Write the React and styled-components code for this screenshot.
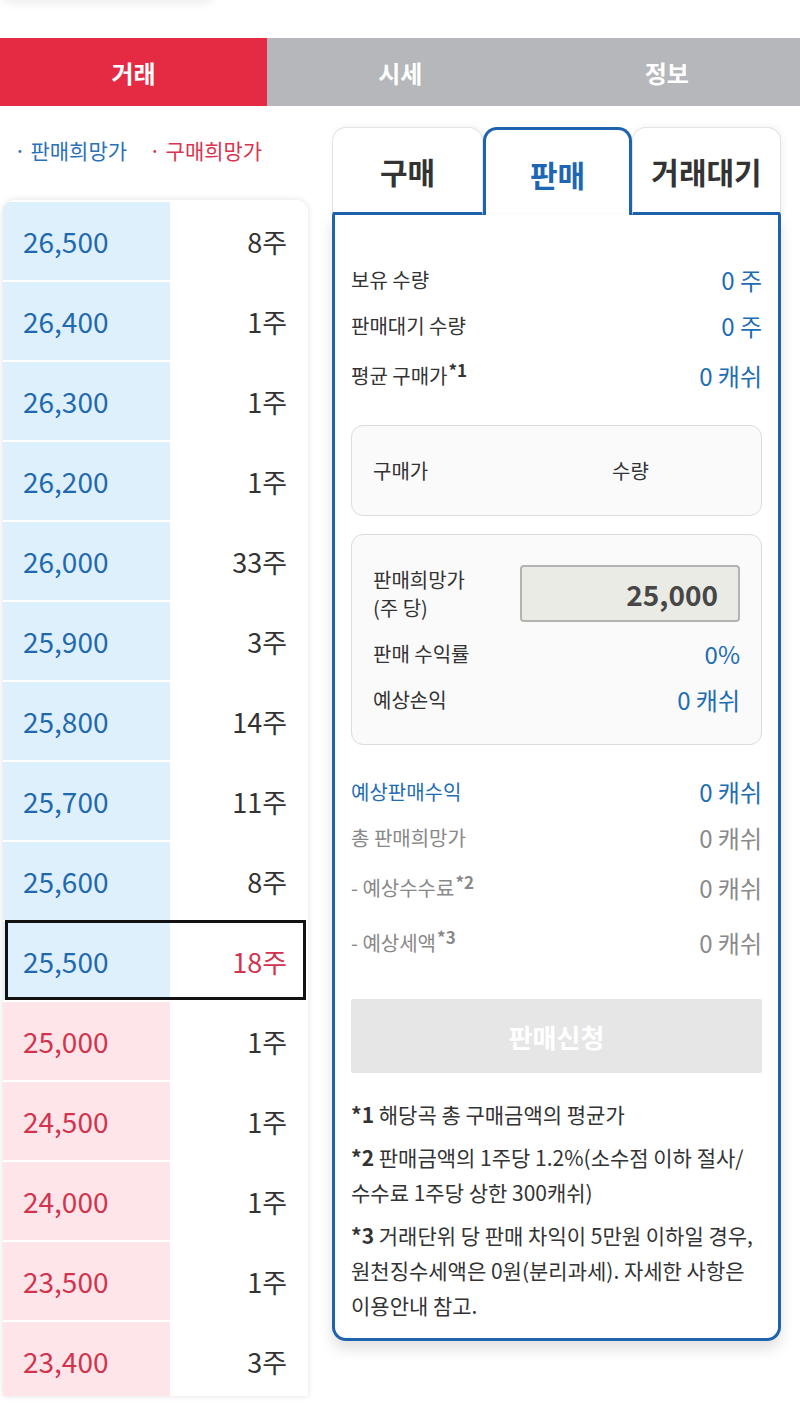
import styled, { createGlobalStyle } from "styled-components";

const GlobalStyle = createGlobalStyle`
  body {
    margin: 0;
    background: #fff;
    font-family: "Noto Sans CJK KR", "Noto Sans", sans-serif;
    color: #333;
  }
`;

const asks = [
  { price: "26,500", qty: "8주" },
  { price: "26,400", qty: "1주" },
  { price: "26,300", qty: "1주" },
  { price: "26,200", qty: "1주" },
  { price: "26,000", qty: "33주" },
  { price: "25,900", qty: "3주" },
  { price: "25,800", qty: "14주" },
  { price: "25,700", qty: "11주" },
  { price: "25,600", qty: "8주" },
  { price: "25,500", qty: "18주", current: true },
];

const bids = [
  { price: "25,000", qty: "1주" },
  { price: "24,500", qty: "1주" },
  { price: "24,000", qty: "1주" },
  { price: "23,500", qty: "1주" },
  { price: "23,400", qty: "3주" },
];

const App = () => {
  return (
    <>
      <GlobalStyle />
      <Page>
        <TopArea>
          <GhostCard />
        </TopArea>
        <MainTabs>
          <MainTab active>거래</MainTab>
          <MainTab>시세</MainTab>
          <MainTab>정보</MainTab>
        </MainTabs>

        <Content>
          <BookColumn>
            <Legend>
              <LegendItem side="sell">· 판매희망가</LegendItem>
              <LegendItem side="buy">· 구매희망가</LegendItem>
            </Legend>
            <Book>
              {asks.map((row) => (
                <BookRow key={row.price} current={row.current}>
                  <PriceCell side="sell">{row.price}</PriceCell>
                  <QtyCell highlight={row.current}>{row.qty}</QtyCell>
                </BookRow>
              ))}
              {bids.map((row) => (
                <BookRow key={row.price}>
                  <PriceCell side="buy">{row.price}</PriceCell>
                  <QtyCell>{row.qty}</QtyCell>
                </BookRow>
              ))}
            </Book>
          </BookColumn>

          <OrderPanel>
            <OrderTabs>
              <OrderTab>구매</OrderTab>
              <OrderTab active>판매</OrderTab>
              <OrderTab>거래대기</OrderTab>
            </OrderTabs>
            <PanelBody>
              <InfoList>
                <InfoRow>
                  <Label>보유 수량</Label>
                  <Value>0 주</Value>
                </InfoRow>
                <InfoRow>
                  <Label>판매대기 수량</Label>
                  <Value>0 주</Value>
                </InfoRow>
                <InfoRow tall>
                  <Label>
                    평균 구매가<Sup>*1</Sup>
                  </Label>
                  <Value>0 캐쉬</Value>
                </InfoRow>
              </InfoList>

              <Box>
                <HeadRow>
                  <Label>구매가</Label>
                  <Label>수량</Label>
                </HeadRow>
              </Box>

              <Box padded>
                <PriceRow>
                  <StackLabel>
                    <span>판매희망가</span>
                    <span>(주 당)</span>
                  </StackLabel>
                  <PriceInput>25,000</PriceInput>
                </PriceRow>
                <InfoRow>
                  <Label>판매 수익률</Label>
                  <Value>0%</Value>
                </InfoRow>
                <InfoRow>
                  <Label>예상손익</Label>
                  <Value>0 캐쉬</Value>
                </InfoRow>
              </Box>

              <Summary>
                <InfoRow>
                  <Label tone="blue">예상판매수익</Label>
                  <Value>0 캐쉬</Value>
                </InfoRow>
                <InfoRow>
                  <Label tone="gray">총 판매희망가</Label>
                  <Value tone="gray">0 캐쉬</Value>
                </InfoRow>
                <InfoRow tall>
                  <Label tone="gray">
                    - 예상수수료<Sup>*2</Sup>
                  </Label>
                  <Value tone="gray">0 캐쉬</Value>
                </InfoRow>
                <InfoRow tall>
                  <Label tone="gray">
                    - 예상세액<Sup>*3</Sup>
                  </Label>
                  <Value tone="gray">0 캐쉬</Value>
                </InfoRow>
              </Summary>

              <SubmitButton disabled>판매신청</SubmitButton>

              <Notes>
                <Note>
                  <b>*1</b> 해당곡 총 구매금액의 평균가
                </Note>
                <Note>
                  <b>*2</b> 판매금액의 1주당 1.2%(소수점 이하 절사/
                  <br />
                  수수료 1주당 상한 300캐쉬)
                </Note>
                <Note>
                  <b>*3</b> 거래단위 당 판매 차익이 5만원 이하일 경우,
                  <br />
                  원천징수세액은 0원(분리과세). 자세한 사항은
                  <br />
                  이용안내 참고.
                </Note>
              </Notes>
            </PanelBody>
          </OrderPanel>
        </Content>
      </Page>
    </>
  );
};

const Page = styled.div`
  width: 800px;
  height: 1420px;
  overflow: hidden;
  background: #fff;
`;

const TopArea = styled.div`
  height: 38px;
  overflow: hidden;
`;

const GhostCard = styled.div`
  width: 215px;
  height: 10px;
  margin-top: -10px;
  background: #fff;
  border-radius: 0 0 12px 12px;
  box-shadow: 0 3px 10px rgba(0, 0, 0, 0.08);
`;

const MainTabs = styled.div`
  display: grid;
  grid-template-columns: 267px 1fr 1fr;
  height: 68px;
  background: #b5b7ba;
`;

const MainTab = styled.div`
  display: flex;
  align-items: center;
  justify-content: center;
  font-size: 24px;
  font-weight: 700;
  color: #fff;
  background: ${(props) => (props.active ? "#e52b44" : "transparent")};
`;

const Content = styled.div`
  display: flex;
  align-items: flex-start;
  padding-left: 3px;
  gap: 24px;
`;

const BookColumn = styled.div`
  width: 305px;
  display: flex;
  flex-direction: column;
`;

const Legend = styled.div`
  display: flex;
  gap: 22px;
  height: 94px;
  padding: 30px 0 0 11px;
  box-sizing: border-box;
`;

const LegendItem = styled.span`
  font-size: 21px;
  line-height: 28px;
  color: ${(props) => (props.side === "sell" ? "#2a72b8" : "#d8344f")};
`;

const Book = styled.div`
  height: 1196px;
  overflow: hidden;
  padding-top: 2px;
  box-sizing: border-box;
  background: #fff;
  border-radius: 12px 12px 0 0;
  box-shadow: 0 0 6px rgba(0, 0, 0, 0.12);
`;

const BookRow = styled.div`
  position: relative;
  display: grid;
  grid-template-columns: 167px 1fr;
  height: 80px;

  &::after {
    content: "";
    display: ${(props) => (props.current ? "block" : "none")};
    position: absolute;
    top: -2px;
    bottom: 2px;
    left: 2px;
    right: 2px;
    border: 3px solid #111;
    pointer-events: none;
  }
`;

const PriceCell = styled.div`
  display: flex;
  align-items: center;
  padding-left: 20px;
  border-bottom: 2px solid #fff;
  font-size: 28px;
  background: ${(props) => (props.side === "sell" ? "#dff0fd" : "#fde5e9")};
  color: ${(props) => (props.side === "sell" ? "#1f6aae" : "#d2344f")};
`;

const QtyCell = styled.div`
  display: flex;
  align-items: center;
  justify-content: flex-end;
  padding-right: 21px;
  padding-bottom: 2px;
  font-size: 27px;
  color: ${(props) => (props.highlight ? "#d2344f" : "#333")};
`;

const OrderPanel = styled.div`
  width: 449px;
  margin-top: 21px;
  display: flex;
  flex-direction: column;
`;

const OrderTabs = styled.div`
  display: grid;
  grid-template-columns: 151px 149px 149px;
  height: 88px;
`;

const OrderTab = styled.div`
  display: flex;
  align-items: center;
  justify-content: center;
  padding-top: 2px;
  font-size: 30px;
  font-weight: 700;
  background: #fff;
  border-radius: 14px 14px 0 0;
  color: ${(props) => (props.active ? "#1d66b3" : "#333")};
  border: ${(props) =>
    props.active ? "3px solid #1d63ad" : "1px solid #e3e3e3"};
  border-bottom: ${(props) =>
    props.active ? "none" : "3px solid #1d63ad"};
  box-shadow: ${(props) =>
    props.active ? "none" : "2px -1px 6px rgba(0, 0, 0, 0.05)"};
`;

const PanelBody = styled.div`
  display: flex;
  flex-direction: column;
  border: 3px solid #1d63ad;
  border-top: none;
  border-radius: 0 0 14px 14px;
  padding: 41px 16px 15px;
  background: #fff;
  box-shadow: 0 8px 14px rgba(0, 0, 0, 0.12);
`;

const InfoList = styled.div`
  display: flex;
  flex-direction: column;
  margin-bottom: 22px;
`;

const InfoRow = styled.div`
  display: flex;
  align-items: center;
  justify-content: space-between;
  height: ${(props) => (props.tall ? "55px" : "46px")};
`;

const Label = styled.span`
  font-size: 20px;
  line-height: 25px;
  color: ${(props) =>
    props.tone === "blue" ? "#1e6db3" : props.tone === "gray" ? "#888" : "#333"};
`;

const StackLabel = styled.div`
  display: flex;
  flex-direction: column;
  font-size: 20px;
  line-height: 28px;
  color: #333;
`;

const Value = styled.span`
  font-size: 24px;
  color: ${(props) => (props.tone === "gray" ? "#8a8a8a" : "#1e6db3")};
`;

const Sup = styled.sup`
  font-size: 17px;
  font-weight: 700;
  vertical-align: 7px;
  line-height: 0;
  margin-left: 1px;
`;

const Box = styled.div`
  display: flex;
  flex-direction: column;
  margin-bottom: 18px;
  padding: ${(props) => (props.padded ? "30px 21px 22px 21px" : "0 21px")};
  background: #fafafa;
  border: 1px solid #dcdcdc;
  border-radius: 12px;
`;

const HeadRow = styled.div`
  display: grid;
  grid-template-columns: 239px 1fr;
  align-items: center;
  height: 89px;
`;

const PriceRow = styled.div`
  display: flex;
  justify-content: space-between;
  align-items: center;
  margin-bottom: 8px;
`;

const PriceInput = styled.div`
  width: 220px;
  height: 57px;
  box-sizing: border-box;
  display: flex;
  align-items: center;
  justify-content: flex-end;
  padding-right: 20px;
  background: #ebebe6;
  border: 2px solid #b3b3b3;
  border-radius: 4px;
  font-size: 28px;
  font-weight: 700;
  color: #474747;
`;

const Summary = styled.div`
  display: flex;
  flex-direction: column;
  margin-top: 5px;
`;

const SubmitButton = styled.button`
  width: 100%;
  height: 74px;
  margin-top: 29px;
  border: none;
  border-radius: 2px;
  background: #e6e6e6;
  color: #fff;
  font-family: inherit;
  font-size: 26px;
  font-weight: 700;
`;

const Notes = styled.div`
  display: flex;
  flex-direction: column;
  gap: 8px;
  margin-top: 24px;
`;

const Note = styled.p`
  margin: 0;
  font-size: 21px;
  line-height: 35px;
  color: #333;

  b {
    font-weight: 700;
  }
`;

export default App;
